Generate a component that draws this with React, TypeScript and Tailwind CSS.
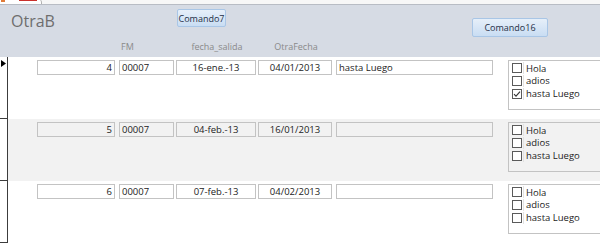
import React from 'react';

// Fila de datos del formulario continuo
interface Registro {
  id: number;
  fm: string;
  fechaSalida: string;
  otraFecha: string;
  texto: string;
  opciones: boolean[];
}

const registros: Registro[] = [
  { id: 4, fm: '00007', fechaSalida: '16-ene.-13', otraFecha: '04/01/2013', texto: 'hasta Luego', opciones: [false, false, true] },
  { id: 5, fm: '00007', fechaSalida: '04-feb.-13', otraFecha: '16/01/2013', texto: '', opciones: [false, false, false] },
  { id: 6, fm: '00007', fechaSalida: '07-feb.-13', otraFecha: '04/02/2013', texto: '', opciones: [false, false, false] },
];

const etiquetas = ['Hola', 'adios', 'hasta Luego'];

const font = "font-['Open_Sans','Noto_Sans',sans-serif]";

const Boton: React.FC<{ texto: string; className?: string }> = ({ texto, className }) => (
  <button
    className={`shrink-0 rounded-[2px] border border-[#a9c6e6] bg-gradient-to-b from-[#e6eff9] to-[#c9ddf3] text-[9px] leading-none text-[#1f2f45] ${className ?? ''}`}
  >
    {texto}
  </button>
);

const Campo: React.FC<{ ancho: string; align: string; gris: boolean; children?: React.ReactNode }> = ({ ancho, align, gris, children }) => (
  <div
    className={`h-[15px] shrink-0 ${ancho} ${align} border border-[#c3c3c3] px-[2px] text-[9.5px] leading-[13px] text-[#222] whitespace-nowrap overflow-hidden ${gris ? 'bg-[#f2f2f2]' : 'bg-white'}`}
  >
    {children}
  </div>
);

const Casilla: React.FC<{ marcada: boolean }> = ({ marcada }) => (
  <div className="w-[10px] h-[10px] shrink-0 border border-[#5a5a5a] bg-white flex items-center justify-center">
    {marcada && (
      <svg width="8" height="8" viewBox="0 0 8 8">
        <path d="M1 4.2 L3 6.2 L7 1.6" fill="none" stroke="#333" strokeWidth="1.1" />
      </svg>
    )}
  </div>
);

const Fila: React.FC<{ r: Registro; gris: boolean; actual: boolean }> = ({ r, gris, actual }) => (
  <div className={`flex h-[62px] ${gris ? 'bg-[#f2f2f2]' : 'bg-white'}`}>
    {/* selector de registro */}
    <div className="w-[8px] shrink-0 border-r border-b border-[#3c3c3c] bg-white relative">
      {actual && (
        <svg className="absolute left-[1px] top-[3px]" width="5" height="7" viewBox="0 0 5 7">
          <path d="M0 0 L5 3.5 L0 7 Z" fill="#000" />
        </svg>
      )}
    </div>
    <div className="flex items-start pt-[3px] pl-[29px]">
      <Campo ancho="w-[78px]" align="text-right" gris={gris}>{r.id}</Campo>
      <Campo ancho="w-[55px] ml-[4px]" align="text-left" gris={gris}>{r.fm}</Campo>
      <Campo ancho="w-[80px] ml-[2px]" align="text-center" gris={gris}>{r.fechaSalida}</Campo>
      <Campo ancho="w-[74px] ml-[2px]" align="text-center" gris={gris}>{r.otraFecha}</Campo>
      <Campo ancho="w-[157px] ml-[4px]" align="text-left" gris={gris}>{r.texto}</Campo>
      <div
        className={`ml-[15px] w-[100px] h-[50px] shrink-0 border border-[#c3c3c3] pt-[1px] pl-[3px] ${gris ? 'bg-[#f2f2f2]' : 'bg-white'}`}
      >
        {etiquetas.map((e, i) => (
          <div key={e} className="flex items-center h-[12.7px]">
            <Casilla marcada={r.opciones[i]} />
            <div className="ml-[1px] w-px h-[12px] bg-[#e2e2e2]" />
            <span className="ml-[2px] text-[9.5px] leading-none text-[#222]">{e}</span>
          </div>
        ))}
      </div>
    </div>
  </div>
);

const App: React.FC = () => {
  return (
    <main className={`w-[600px] h-[243px] overflow-hidden bg-white ${font}`}>
      {/* pestaña superior */}
      <div className="h-[5px] flex items-end border-b border-[#b8bcc4] bg-[#f7f7f7]">
        <div className="w-[42px] h-[5px] bg-white border-r border-[#b0b0b0] rounded-tr-[4px] flex items-start">
          <div className="ml-[1px] w-[4px] h-[3px] bg-[#e07b39]" />
          <div className="ml-[14px] w-[18px] h-[2px] bg-[#c9302c]" />
        </div>
      </div>

      {/* encabezado */}
      <header className="h-[52px] bg-[#d6dbe4] flex flex-col">
        <div className="h-[32px] flex items-start">
          <div className="ml-[11px] w-[166px] shrink-0 mt-[5px] text-[16px] leading-[22px] font-normal text-[#6e6e6e] font-['Open_Sans','Noto_Sans',sans-serif]">
            OtraB
          </div>
          <Boton texto="Comando7" className="mt-[4px] w-[49px] h-[18px]" />
          <Boton texto="Comando16" className="ml-[246px] mt-[13px] w-[76px] h-[19px]" />
        </div>
        <div className="h-[20px] flex items-center text-[9px] text-[#8a8a8a] pl-[121px]">
          <span className="w-[56px]">FM</span>
          <span className="w-[80px] text-center">fecha_salida</span>
          <span className="w-[74px] ml-[2px] text-center">OtraFecha</span>
        </div>
      </header>

      {/* detalle */}
      {registros.map((r, i) => (
        <Fila key={r.id} r={r} gris={i === 1} actual={i === 0} />
      ))}
    </main>
  );
};

export default App;
